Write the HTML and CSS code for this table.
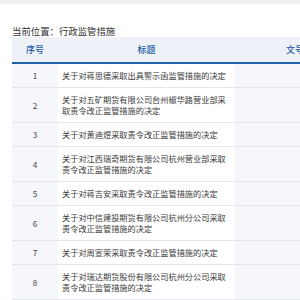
FILE: index.html
```html
<!DOCTYPE html>
<html lang="zh-CN">
<head>
<meta charset="utf-8">
<title>行政监管措施</title>
<link rel="stylesheet" href="styles.css">
</head>
<body>
<div class="topbar"></div>
<div class="content">
  <div class="crumb">当前位置：行政监管措施</div>
  <table class="list">
    <colgroup>
      <col class="c-no">
      <col class="c-title">
      <col class="c-doc">
    </colgroup>
    <thead>
      <tr><th>序号</th><th>标题</th><th>文号</th></tr>
    </thead>
    <tbody>
      <tr><td class="no">1</td><td class="tt">关于对蒋思德采取出具警示函监管措施的决定</td><td class="doc"></td></tr>
      <tr><td class="no">2</td><td class="tt">关于对五矿期货有限公司台州椒华路营业部采取责令改正监管措施的决定</td><td class="doc"></td></tr>
      <tr><td class="no">3</td><td class="tt">关于对黄迪煜采取责令改正监管措施的决定</td><td class="doc"></td></tr>
      <tr><td class="no">4</td><td class="tt">关于对江西瑞奇期货有限公司杭州营业部采取责令改正监管措施的决定</td><td class="doc"></td></tr>
      <tr><td class="no">5</td><td class="tt">关于对蒋吉安采取责令改正监管措施的决定</td><td class="doc"></td></tr>
      <tr><td class="no">6</td><td class="tt">关于对中信建投期货有限公司杭州分公司采取责令改正监管措施的决定</td><td class="doc"></td></tr>
      <tr><td class="no">7</td><td class="tt">关于对周宣荣采取责令改正监管措施的决定</td><td class="doc"></td></tr>
      <tr><td class="no">8</td><td class="tt">关于对瑞达期货股份有限公司杭州分公司采取责令改正监管措施的决定</td><td class="doc"></td></tr>
    </tbody>
  </table>
</div>
</body>
</html>
```
FILE: styles.css
```css
html, body {
  margin: 0;
  padding: 0;
  overflow: hidden;
  background: #ffffff;
  font-family: "Noto Sans CJK SC", "Noto Sans", sans-serif;
}
.topbar {
  height: 4px;
  background: #f0f0f0;
}
.content {
  padding: 0 0 0 12px;
}
.crumb {
  font-size: 9.4px;
  line-height: 12px;
  color: #333333;
  padding-top: 21px;
  height: 12px;
  white-space: nowrap;
}
.list {
  border-collapse: collapse;
  table-layout: fixed;
  width: 343px;
}
.c-no { width: 46px; }
.c-title { width: 177px; }
.c-doc { width: 120px; }
.list th {
  background: #eef2f8;
  color: #1f5ca6;
  font-size: 9px;
  font-weight: 500;
  height: 25px;
  padding: 0;
  text-align: center;
  border-bottom: 2px solid #2460a7;
  white-space: nowrap;
}
.list td {
  font-size: 8.2px;
  line-height: 11px;
  color: #444444;
  padding: 6px 0 6px 0;
  border-bottom: 1px solid #e4e7eb;
  vertical-align: middle;
}
.list td.no {
  background: #f5f7fa;
  text-align: center;
}
.list td.tt {
  padding-left: 4px;
  padding-right: 6px;
  color: #3a3a3a;
}
.list td.doc {
  background: #f5f7fa;
}
```
